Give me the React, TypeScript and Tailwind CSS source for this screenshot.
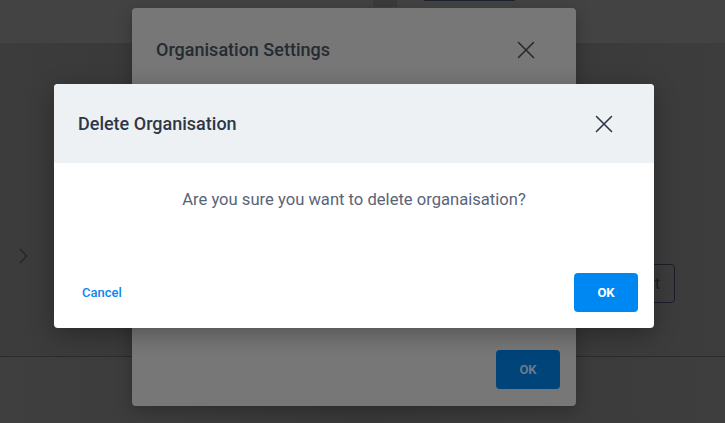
import React from "react";

function CloseIcon({ className = "" }: { className?: string }) {
  return (
    <svg
      viewBox="0 0 24 24"
      className={className}
      fill="none"
      stroke="currentColor"
      strokeWidth={1.6}
      strokeLinecap="round"
    >
      <path d="M4.5 4.5l15 15M19.5 4.5l-15 15" />
    </svg>
  );
}

export default function App() {
  return (
    <div
      className="relative w-[725px] h-[423px] overflow-hidden bg-[#393939]"
      style={{ fontFamily: "Roboto, 'Liberation Sans', sans-serif" }}
    >
      {/* dimmed page underneath */}
      <div className="flex flex-col h-full">
        <header className="h-[43px] bg-[#434343] flex items-start">
          <div className="ml-[373px] w-[24px] h-[7px] bg-[#3b3b3b]" />
          <div className="ml-[27px] w-[91px] h-[1px] bg-[#1d2430]" />
        </header>
        <main className="flex-1 bg-gradient-to-r from-[#3c3c3c] via-[#363636] to-[#3d3d3d] flex items-start justify-between pt-[204px] pr-[50px]">
          <svg
            viewBox="0 0 10 18"
            className="ml-[19px] w-[9px] h-[18px] text-[#262626]"
            fill="none"
            stroke="currentColor"
            strokeWidth={1.4}
          >
            <path d="M1 1l7.5 8L1 17" />
          </svg>
          <div className="mt-[17px] w-[120px] h-[39px] border border-[#1a1e26] rounded-[4px] flex items-center justify-end pr-[14px] text-[#1d2128] text-[16px]">
            t
          </div>
        </main>
        <div className="h-[1px] bg-[#2c2c2c]" />
        <footer className="h-[66px] bg-gradient-to-r from-[#3f3f3f] via-[#383838] to-[#3e3e3e]" />
      </div>

      {/* Organisation Settings modal (dimmed) */}
      <div className="absolute left-[132px] top-[8px] w-[444px] h-[398px] rounded-[4px] bg-[#777777] shadow-[0_4px_16px_rgba(0,0,0,0.25)] flex flex-col">
        <div className="flex items-center justify-between pl-[24px] pr-[38px] pt-[28px]">
          <h2 className="text-[18px] font-medium text-[#262a31]">
            Organisation Settings
          </h2>
          <CloseIcon className="w-[24px] h-[24px] text-[#262a31]" />
        </div>
        <div className="flex-1" />
        <div className="flex justify-end pr-[16px] pb-[17px]">
          <div className="w-[64px] h-[39px] rounded-[4px] bg-[#00447a] flex items-center justify-center text-[13px] font-bold text-[#6b7a8a]">
            OK
          </div>
        </div>
      </div>

      {/* Delete Organisation modal */}
      <div className="absolute left-[54px] top-[84px] w-[600px] h-[244px] rounded-[4px] bg-white overflow-hidden shadow-[0_6px_24px_rgba(0,0,0,0.3)] flex flex-col">
        <div className="h-[79px] bg-[#edf1f4] flex items-center justify-between pl-[24px] pr-[38px]">
          <h2 className="text-[18px] font-medium text-[#2d3748]">
            Delete Organisation
          </h2>
          <CloseIcon className="w-[24px] h-[24px] text-[#2d3748]" />
        </div>
        <div className="flex-1 flex flex-col">
          <p className="pt-[25px] text-center text-[16.6px] text-[#5a6478]">
            Are you sure you want to delete organaisation?
          </p>
          <div className="flex-1" />
          <div className="flex items-center justify-between pl-[28px] pr-[16px] pb-[16px]">
            <button className="text-[13px] font-medium text-[#0a87f0]">
              Cancel
            </button>
            <button className="w-[64px] h-[39px] rounded-[4px] bg-[#0088f2] text-white text-[13px] font-bold">
              OK
            </button>
          </div>
        </div>
      </div>
    </div>
  );
}
